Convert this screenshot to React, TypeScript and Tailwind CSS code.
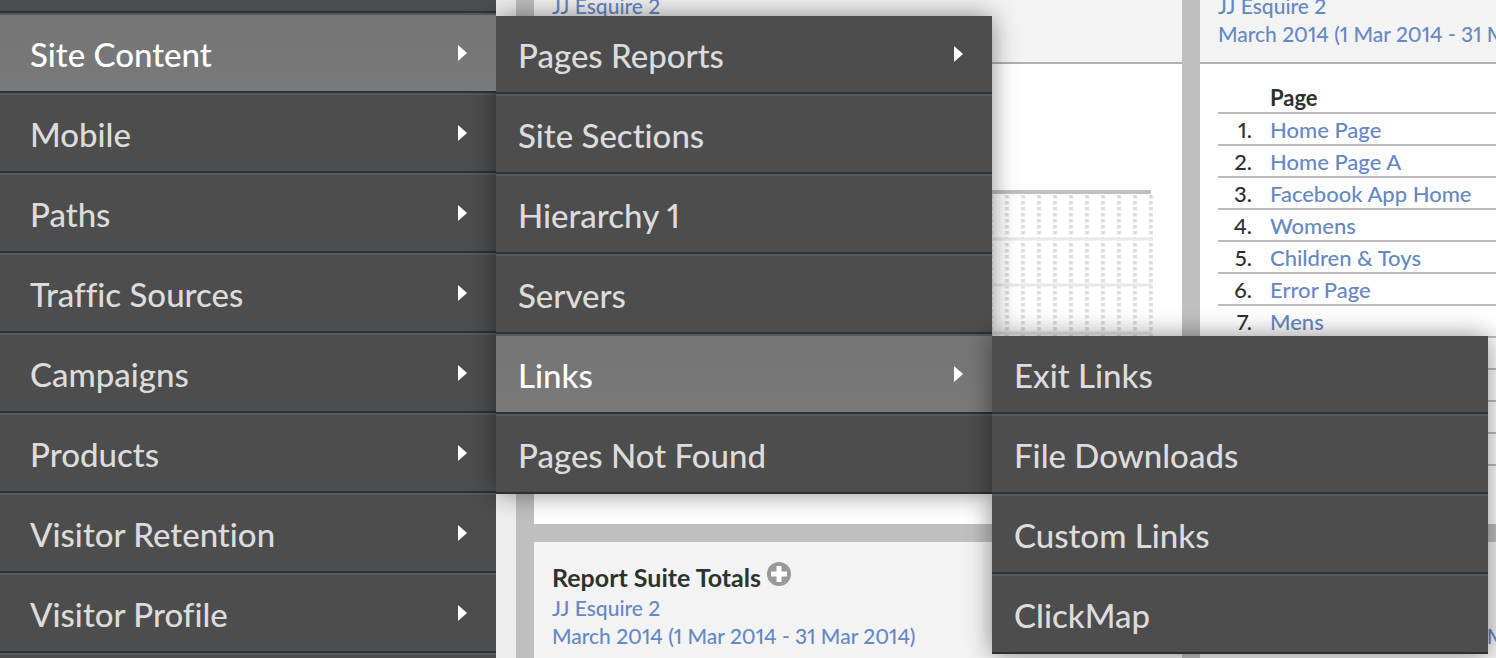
type Item = { label: string; arrow?: boolean; active?: boolean; children?: Item[] };

const menu: Item[] = [
  {
    label: "Site Content",
    arrow: true,
    active: true,
    children: [
      { label: "Pages Reports", arrow: true },
      { label: "Site Sections" },
      { label: "Hierarchy 1" },
      { label: "Servers" },
      {
        label: "Links",
        arrow: true,
        active: true,
        children: [
          { label: "Exit Links" },
          { label: "File Downloads" },
          { label: "Custom Links" },
          { label: "ClickMap" },
        ],
      },
      { label: "Pages Not Found" },
    ],
  },
  { label: "Mobile", arrow: true },
  { label: "Paths", arrow: true },
  { label: "Traffic Sources", arrow: true },
  { label: "Campaigns", arrow: true },
  { label: "Products", arrow: true },
  { label: "Visitor Retention", arrow: true },
  { label: "Visitor Profile", arrow: true },
];

const pages = [
  "Home Page",
  "Home Page A",
  "Facebook App Home",
  "Womens",
  "Children & Toys",
  "Error Page",
  "Mens",
];
const emptyRows = [8, 9, 10, 11];

function Arrow() {
  return (
    <svg width="10" height="16" viewBox="0 0 10 16" className="shrink-0" aria-hidden="true">
      <path d="M1 0 L10 8 L1 16 Z" fill="#fff" />
    </svg>
  );
}

function MenuItem({ item, level }: { item: Item; level: number }) {
  const inset = level === 0 ? "pl-[30px]" : "pl-[22px]";
  const tone = item.active
    ? "bg-linear-to-b from-[#757575] to-[#797979] text-white"
    : "bg-[#4d4d4d] text-[#dcdcdc]";
  const edge = level === 0 ? "border-t-2" : "border-t-2 first:border-t-0";
  const lift = level === 0 && item.active ? "relative z-20" : "";
  return (
    <li className={`relative border-b-2 border-t-[#55595b] border-b-[#2e3133] ${edge}`}>
      <button
        type="button"
        className={`flex h-[76px] w-full items-center justify-between pr-[29px] text-left ${inset} ${tone} ${lift}`}
      >
        <span className="pt-1">{item.label}</span>
        {item.arrow && <Arrow />}
      </button>
      {item.children && (
        <ul
          className={`absolute left-full z-10 w-[496px] shadow-[0_0_24px_rgba(0,0,0,0.45)] ${level === 0 ? "top-px" : "top-0"}`}
        >
          {item.children.map((c) => (
            <MenuItem key={c.label} item={c} level={level + 1} />
          ))}
        </ul>
      )}
    </li>
  );
}

function SuiteLink() {
  return <a href="#suite" className="block whitespace-nowrap">JJ Esquire 2</a>;
}

function PeriodLink() {
  return <a href="#period" className="block whitespace-nowrap">March 2014 (1 Mar 2014 - 31 Mar 2014)</a>;
}

const clippedHeader =
  "flex h-16 flex-col justify-end overflow-hidden border-b-2 border-[#b1b1b1] bg-[#f3f3f3] px-[18px] text-[21px] leading-7 font-medium text-[#6588c6]";

function ChartGrid() {
  const columns = Array.from({ length: 37 }, (_, i) => 599 - i * 16);
  return (
    <svg width="601" height="240" viewBox="0 0 601 240" aria-hidden="true">
      {columns.map((x) => (
        <g key={x}>
          <line x1={x} x2={x} y1="5" y2="240" stroke="#f1f1f1" strokeWidth="5" strokeDasharray="4 2" />
          <line x1={x} x2={x} y1="5" y2="240" stroke="#dadada" strokeWidth="3" strokeDasharray="3 3" />
        </g>
      ))}
      {[49, 95, 143, 191].map((y) => (
        <line key={y} x1="0" x2="600" y1={y} y2={y} stroke="#e8e8e8" strokeWidth="3" />
      ))}
      <line x1="0" x2="599" y1="2" y2="2" stroke="#c0c0c0" strokeWidth="4" />
    </svg>
  );
}

export default function App() {
  return (
    <div className="flex h-screen overflow-hidden bg-[#eeeeee] font-['Lato','Noto_Sans',sans-serif] proportional-nums [font-variant-ligatures:none]">
      <nav className="relative z-10 w-[496px] shrink-0 bg-[#4d4d4d] text-[33px] font-medium" aria-label="Reports">
        <ul>
          <li className="h-[13px] border-b-2 border-[#2e3133]" aria-hidden="true" />
          {menu.map((m) => (
            <MenuItem key={m.label} item={m} level={0} />
          ))}
          <li className="h-20 border-t-2 border-[#55595b]" aria-hidden="true" />
        </ul>
      </nav>

      <main className="ml-5 grid min-w-0 flex-1 auto-rows-max grid-cols-[648px_minmax(0,1fr)] content-start gap-[18px] bg-[#bfbfbf] pl-[18px] text-[22px]">
        <section className="bg-white">
          <header className={`pb-[42px] ${clippedHeader}`}>
            <SuiteLink />
          </header>
          <div className="flex justify-end pt-[126px] pr-[29px]">
            <ChartGrid />
          </div>
        </section>

        <section className="bg-white">
          <header className={`pb-3.5 ${clippedHeader}`}>
            <SuiteLink />
            <PeriodLink />
          </header>
          <div className="pt-[17px] pb-[58px] pl-[18px]">
            <table className="w-full table-fixed border-collapse text-left leading-7 font-medium whitespace-nowrap">
              <thead>
                <tr className="h-8 border-b-2 border-[#bdbdbd]">
                  <th className="w-[52px]" />
                  <th className="p-0 pt-0.5 font-bold text-[#2b3331]">Page</th>
                </tr>
              </thead>
              <tbody>
                {pages.map((p, i) => (
                  <tr key={p} className="h-8 border-b-2 border-[#bdbdbd]">
                    <td className="p-0 pt-0.5 pr-[18px] text-right text-[#2b2f2f]">{i + 1}.</td>
                    <td className="p-0 pt-0.5">
                      <a href="#page" className="text-[#6588c6]">{p}</a>
                    </td>
                  </tr>
                ))}
                {emptyRows.map((n) => (
                  <tr key={n} className="h-8 border-b-2 border-[#bdbdbd]">
                    <td />
                    <td />
                  </tr>
                ))}
              </tbody>
            </table>
          </div>
        </section>

        <section className="h-[200px] bg-[#f3f3f3] px-[18px] pt-5">
          <div className="mb-0.5 flex items-center gap-1.5">
            <h2 className="text-[25px] leading-[30px] font-bold text-[#2b3331]">Report Suite Totals</h2>
            <button type="button" aria-label="Add" className="mb-1.5">
              <svg width="24" height="24" viewBox="0 0 24 24" aria-hidden="true">
                <circle cx="12" cy="12" r="12" fill="#999" />
                <path d="M9.5 4h5v5.5H20v5h-5.500V20h-5v-5.500H4v-5h5.500z" fill="#fff" />
              </svg>
            </button>
          </div>
          <div className="text-[21px] leading-7 font-medium text-[#6588c6]">
            <SuiteLink />
            <PeriodLink />
          </div>
        </section>

        <section className="h-[200px] overflow-hidden bg-[#f3f3f3] px-[18px] pt-[52px] text-[21px] leading-7 font-medium text-[#6588c6]">
          <SuiteLink />
          <PeriodLink />
        </section>
      </main>
    </div>
  );
}
